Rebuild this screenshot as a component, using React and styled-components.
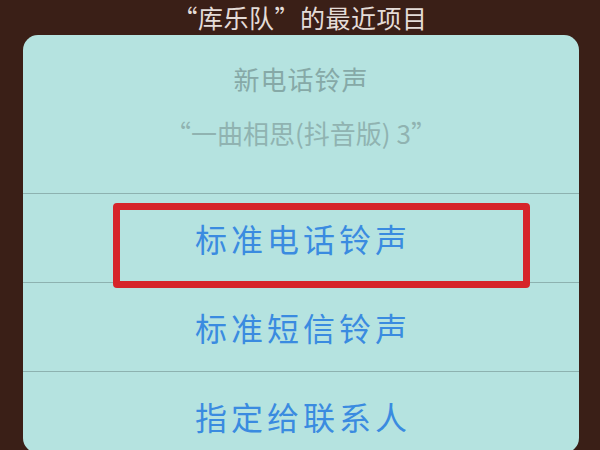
import styled, { createGlobalStyle } from 'styled-components'

const GlobalStyle = createGlobalStyle`
  html, body {
    margin: 0;
    padding: 0;
    background-color: #3a1f17;
  }
  body {
    font-family: "Noto Sans CJK SC", "Noto Sans", sans-serif;
  }
`

const rows = ['标准电话铃声', '标准短信铃声', '指定给联系人']

export default function App() {
  return (
    <>
      <GlobalStyle />
      <Screen>
        <Title>“库乐队”的最近项目</Title>
        <Sheet>
          <Header>
            <HeaderLine>新电话铃声</HeaderLine>
            <HeaderLine $sub>“一曲相思(抖音版) 3”</HeaderLine>
          </Header>
          {rows.map((label, i) => (
            <Row key={label}>
              {label}
              {i === 0 && <Highlight />}
            </Row>
          ))}
        </Sheet>
      </Screen>
    </>
  )
}

const Screen = styled.div`
  width: 600px;
  height: 450px;
  overflow: hidden;
  background-color: #3a1f17;
  display: flex;
  flex-direction: column;
`

const Title = styled.div`
  height: 35px;
  flex-shrink: 0;
  line-height: 35px;
  text-align: center;
  font-size: 25px;
  color: #e4dcd8;
  letter-spacing: 0.5px;
`

const Sheet = styled.div`
  margin: 0 21px 0 23px;
  height: 418px;
  flex-shrink: 0;
  overflow: hidden;
  background-color: #b5e3e0;
  border-radius: 15px;
  display: flex;
  flex-direction: column;
`

const Header = styled.div`
  height: 158px;
  flex-shrink: 0;
  box-sizing: border-box;
  padding-top: 24px;
  display: flex;
  flex-direction: column;
  align-items: center;
  gap: 14px;
`

const HeaderLine = styled.div`
  height: 40px;
  line-height: 40px;
  font-size: 26px;
  letter-spacing: ${p => (p.$sub ? '0' : '1px')};
  color: ${p => (p.$sub ? '#90b3b1' : '#86a9a7')};
`

const Row = styled.div`
  position: relative;
  height: 88px;
  flex-shrink: 0;
  border-top: 1px solid #8db2b0;
  display: flex;
  align-items: center;
  justify-content: center;
  padding-left: 4px;
  font-size: 32px;
  letter-spacing: 4px;
  color: #3a8be0;
`

const Highlight = styled.div`
  position: absolute;
  left: 90px;
  top: 9px;
  width: 417px;
  height: 85px;
  box-sizing: border-box;
  border: 7px solid #d6252a;
  border-radius: 4px;
  z-index: 1;
`
